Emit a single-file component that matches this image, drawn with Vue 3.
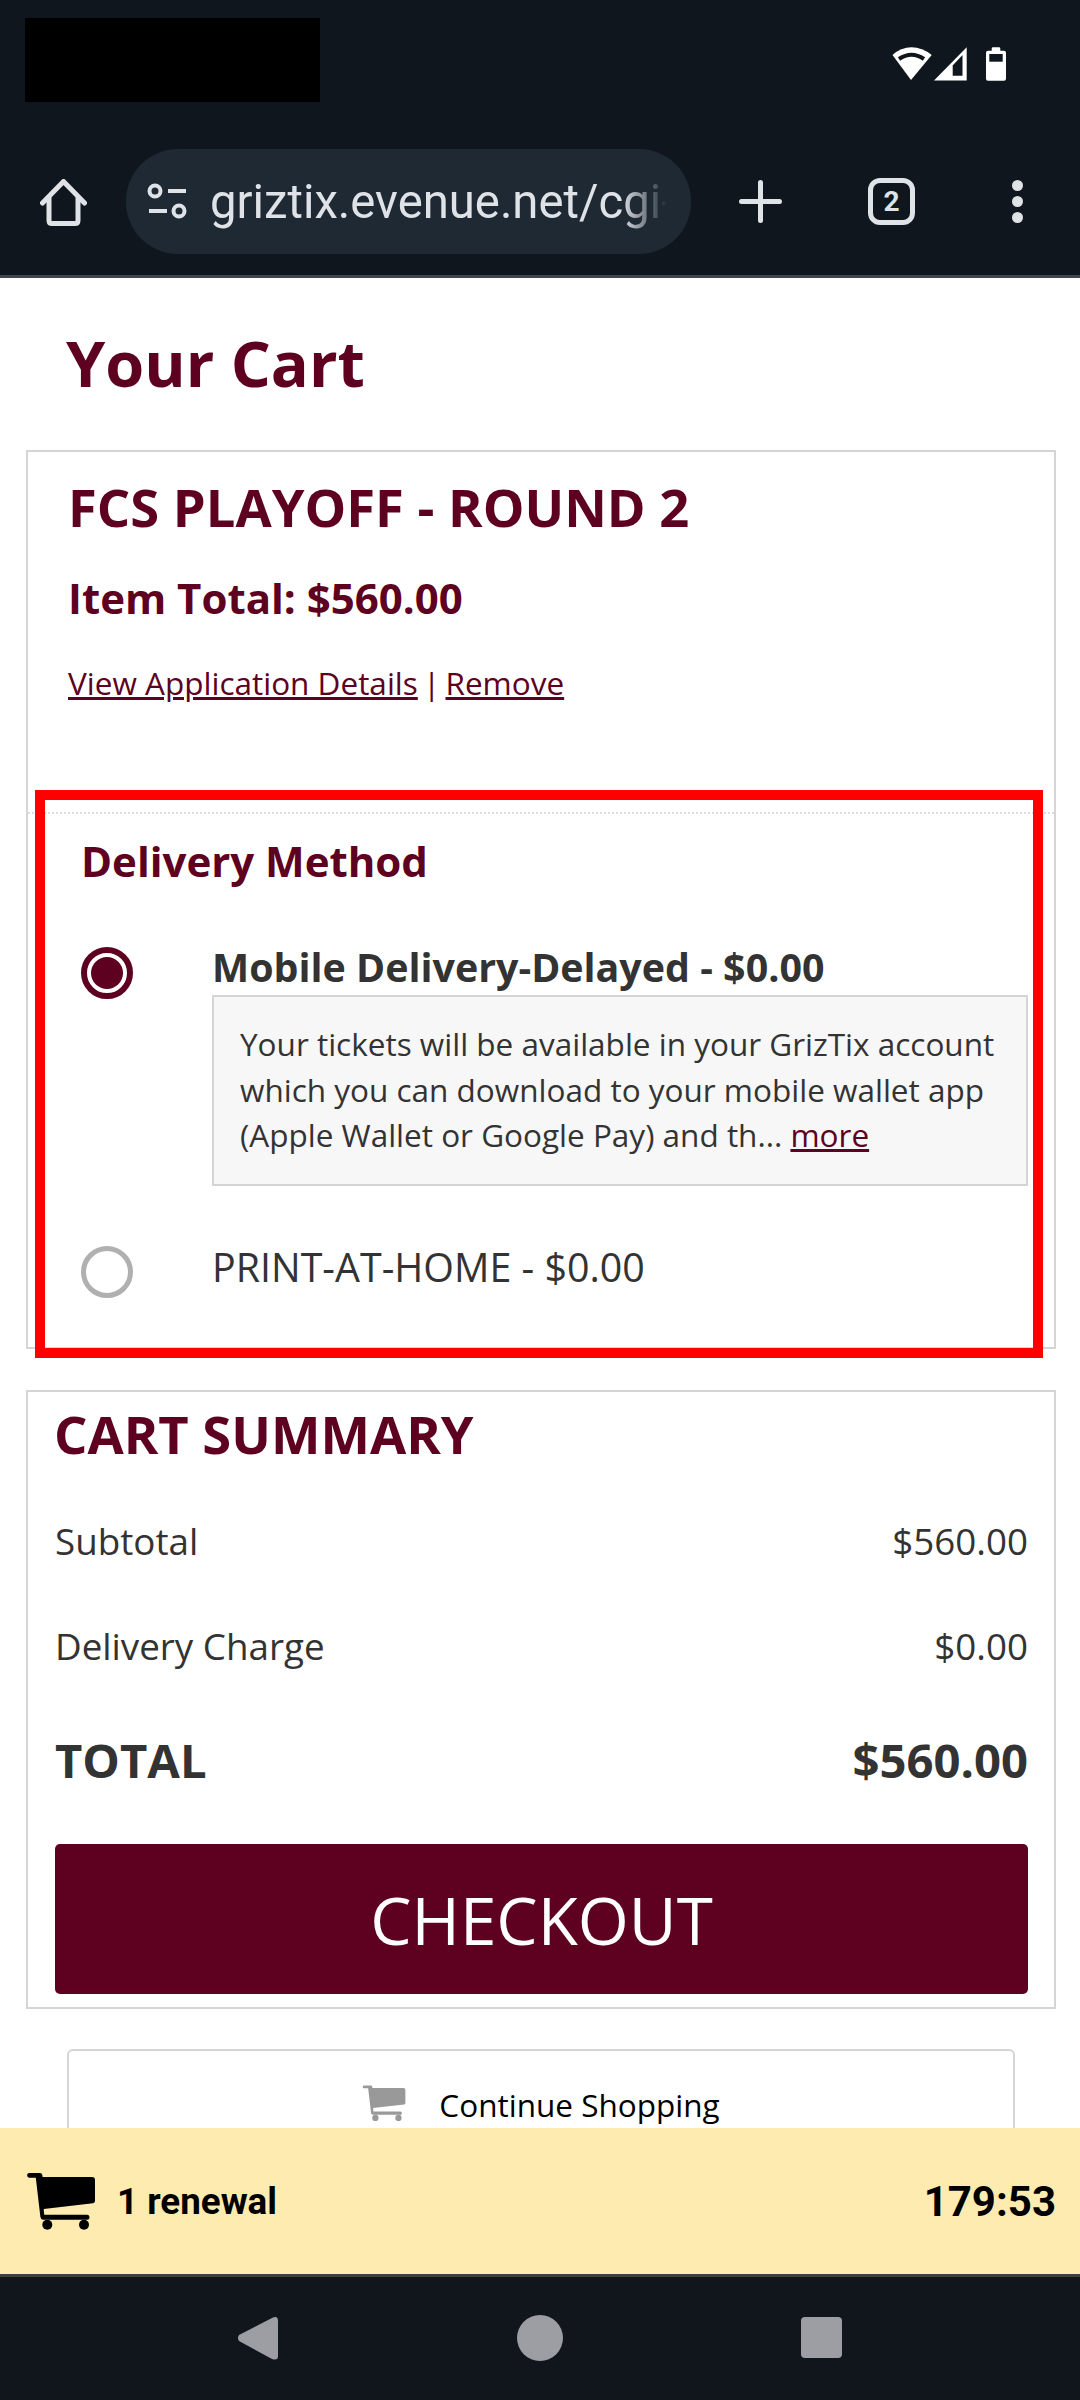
<template>
  <div class="phone">
    <header class="browser">
      <div class="status-row">
        <div class="status-blackout"></div>
        <svg class="status-icons" width="140" height="70" viewBox="0 0 140 70">
          <path d="M12.5 25Q21 17.3 31.5 17.3T51.7 25L31 50Z" fill="#fff" />
          <path d="M19 29Q31.5 20.5 44 29" fill="none" stroke="#10161d" stroke-width="4" />
          <path d="M54 50.5L86.7 17.3V50.5Z" fill="#fff" />
          <path d="M72.7 45.7V35.5L82.5 25V45.7Z" fill="#10161d" />
          <path d="M111.7 20.7V18.5Q111.7 17.3 113 17.3H119Q120.3 17.3 120.3 18.5V20.7H124Q126 20.7 126 22.7V48.7Q126 50.7 124 50.7H108Q106 50.7 106 48.7V22.7Q106 20.7 108 20.7Z" fill="#fff" />
          <rect x="109.3" y="24" width="13.4" height="7.7" fill="#10161d" />
        </svg>
      </div>
      <div class="toolbar">
        <svg class="home" width="47" height="47" viewBox="0 0 47 47" fill="none" stroke="#dfe2e7" stroke-width="5" stroke-linejoin="round" stroke-linecap="round">
          <path d="M2.5 24L23.5 2.5L44.5 24" />
          <path d="M9 19V41.5Q9 44.5 12 44.5H35Q38 44.5 38 41.5V19" />
        </svg>
        <div class="url-pill">
          <svg class="tune" width="44" height="38" viewBox="0 0 44 38" fill="none" stroke="#dfe2e7" stroke-width="4">
            <circle cx="9" cy="8" r="5.5" />
            <path d="M22 8H40" />
            <path d="M3 28H21" />
            <circle cx="33" cy="28" r="5.5" />
          </svg>
          <span class="url-text">griztix.evenue.net/cgi-bin</span>
        </div>
        <svg class="plus" width="43" height="43" viewBox="0 0 43 43" stroke="#dfe2e7" stroke-width="5" stroke-linecap="round">
          <path d="M21.5 2.5V40.5M2.5 21.5H40.5" />
        </svg>
        <div class="tabs">2</div>
        <div class="dots"><i></i><i></i><i></i></div>
      </div>
    </header>

    <main class="page">
      <h1 class="page-title">Your Cart</h1>

      <section class="card item-card">
        <div class="item-head">
          <h2 class="item-name">FCS PLAYOFF - ROUND 2</h2>
          <div class="item-total">Item Total: $560.00</div>
          <div class="item-links"><a>View Application Details</a> <span class="sep">|</span> <a>Remove</a></div>
        </div>

        <div class="delivery">
          <h3 class="delivery-title">Delivery Method</h3>
          <div class="option">
            <span class="radio checked"></span>
            <div class="option-body">
              <div class="option-label strong">Mobile Delivery-Delayed - $0.00</div>
              <div class="option-note">
                Your tickets will be available in your GrizTix account which you can download to your mobile wallet app (Apple Wallet or Google Pay) and th... <a>more</a>
              </div>
            </div>
          </div>
          <div class="option second">
            <span class="radio"></span>
            <div class="option-body">
              <div class="option-label">PRINT-AT-HOME - $0.00</div>
            </div>
          </div>
          <!-- red annotation drawn over the screenshot -->
          <div class="annotation"></div>
        </div>
      </section>

      <section class="card summary">
        <h2 class="summary-title">CART SUMMARY</h2>
        <div v-for="row in summaryRows" :key="row.label" class="summary-row">
          <span>{{ row.label }}</span><span>{{ row.value }}</span>
        </div>
        <div class="summary-row total"><span>TOTAL</span><span>$560.00</span></div>
        <button class="checkout">CHECKOUT</button>
      </section>

      <div class="continue">
        <svg class="continue-cart" width="44" height="38" viewBox="0 0 70 60">
          <path :d="cartPath" fill="#999" />
          <circle cx="21.3" cy="53.7" r="5" fill="#999" />
          <circle cx="58" cy="53.7" r="5" fill="#999" />
        </svg>
        <span>Continue Shopping</span>
      </div>
    </main>

    <div class="cart-bar">
      <div class="cart-count">
        <svg width="70" height="60" viewBox="0 0 70 60">
          <path :d="cartPath" fill="#000" />
          <circle cx="21.3" cy="53.7" r="5" fill="#000" />
          <circle cx="58" cy="53.7" r="5" fill="#000" />
        </svg>
        <span>1 renewal</span>
      </div>
      <div class="cart-timer">179:53</div>
    </div>

    <nav class="android-nav">
      <svg class="nav-back" width="41" height="46" viewBox="0 0 41 46">
        <path d="M35 3L2 20Q0 23 2 26L35 44Q41 46 41 41V6Q41 0 35 3Z" fill="#9d9ea3" />
      </svg>
      <span class="nav-home"></span>
      <span class="nav-recent"></span>
    </nav>
  </div>
</template>

<script setup>
const summaryRows = [
  { label: 'Subtotal', value: '$560.00' },
  { label: 'Delivery Charge', value: '$0.00' }
]

// same cart shape for the grey and the black icon
const cartPath = 'M3 2H14Q16 2 16.3 4L16.6 6H66Q69 6 69 9V30Q69 32 67 32.3L17.7 38L18.2 43.7H61A2.5 2.5 0 0 1 61 48.7H17Q14.7 48.7 14.4 46L9.8 6.7H3A2.4 2.4 0 0 1 3 2Z'
</script>

<style>
html,
body {
  margin: 0;
  background: #fff;
}
</style>

<style scoped>
.phone {
  width: 1080px;
  height: 2400px;
  display: flex;
  flex-direction: column;
  overflow: hidden;
  font-family: "Open Sans", "Liberation Sans", sans-serif;
  color: #333;
  background: #fff;
}

/* browser chrome */
.browser {
  height: 278px;
  flex: none;
  box-sizing: border-box;
  background: #10161d;
  border-bottom: 3px solid #40464b;
}
.status-row {
  height: 149px;
  box-sizing: border-box;
  display: flex;
  justify-content: space-between;
  align-items: flex-start;
  padding: 18px 60px 0 25px;
}
.status-blackout {
  width: 295px;
  height: 84px;
  background: #000;
}
.status-icons {
  margin-top: 12px;
}
.toolbar {
  display: flex;
  align-items: center;
  height: 105px;
  padding-left: 40px;
}
.home {
  flex: none;
  margin-top: 2px;
}
.url-pill {
  flex: none;
  width: 565px;
  height: 105px;
  margin-left: 39px;
  box-sizing: border-box;
  padding: 0 24px 0 20px;
  display: flex;
  align-items: center;
  border-radius: 52px;
  background: #1f2933;
}
.tune {
  flex: none;
}
.url-text {
  flex: 1;
  min-width: 0;
  margin-left: 20px;
  overflow: hidden;
  white-space: nowrap;
  font-family: Roboto, "Liberation Sans", sans-serif;
  font-size: 47.25px;
  color: #dfe2e7;
  -webkit-mask-image: linear-gradient(to right, #000 90%, transparent);
  mask-image: linear-gradient(to right, #000 90%, transparent);
}
.plus {
  flex: none;
  margin-left: 48px;
}
.tabs {
  flex: none;
  width: 47px;
  height: 47px;
  margin-left: 86px;
  box-sizing: border-box;
  border: 5px solid #dfe2e7;
  border-radius: 12px;
  display: flex;
  align-items: center;
  justify-content: center;
  font-family: Roboto, "Liberation Sans", sans-serif;
  font-size: 28px;
  font-weight: 700;
  color: #dfe2e7;
}
.dots {
  flex: none;
  margin-left: 97px;
  display: flex;
  flex-direction: column;
  gap: 5px;
}
.dots i {
  display: block;
  width: 11px;
  height: 11px;
  border-radius: 50%;
  background: #dfe2e7;
}

/* page */
.page {
  flex: 1;
  min-height: 0;
  overflow: hidden;
}
.page-title {
  margin: 45px 0 47px 66px;
  font-size: 63px;
  line-height: 80px;
  font-weight: 700;
  color: #5e0020;
}
.card {
  width: 1030px;
  margin-left: 26px;
  box-sizing: border-box;
  border: 2px solid #d5d5d5;
}
.item-head {
  padding: 23px 0 0 40px;
}
.item-name {
  margin: 0;
  font-size: 52.5px;
  line-height: 64px;
  font-weight: 700;
  color: #5e0020;
}
.item-total {
  margin-top: 32px;
  font-size: 42px;
  line-height: 54px;
  font-weight: 700;
  color: #5e0020;
}
.item-links {
  margin-top: 36px;
  font-size: 31.5px;
  line-height: 44px;
  color: #5e0020;
}
.sep {
  margin: 0 -3px;
}
.item-links a,
.option-note a {
  color: #5e0020;
  text-decoration: underline;
}

.delivery {
  position: relative;
  margin-top: 107px;
  padding: 20px 26px 49px 53px;
  border-top: 2px dotted #ddd;
}
.delivery-title {
  margin: 0;
  font-size: 42px;
  line-height: 54px;
  font-weight: 700;
  color: #5e0020;
}
.option {
  display: flex;
  margin-top: 54px;
}
.option.second {
  margin-top: 56px;
}
.radio {
  flex: none;
  width: 52px;
  height: 52px;
  margin: 5px 79px 0 0;
  box-sizing: border-box;
  border: 5px solid #b0b0b0;
  border-radius: 50%;
}
.second .radio {
  margin-top: 4px;
}
.radio.checked {
  border: 6px solid #5e0020;
  padding: 4px;
  background: #5e0020 content-box;
}
.option-body {
  flex: 1;
  min-width: 0;
}
.option-label {
  font-size: 39.4px;
  line-height: 50px;
}
.option-label.strong {
  font-weight: 700;
}
.option-note {
  margin-top: 3px;
  padding: 24px 20px 26px 26px;
  border: 2px solid #d5d5d5;
  background: #f7f7f7;
  font-size: 31.5px;
  line-height: 45.7px;
}
.annotation {
  position: absolute;
  top: -24px;
  left: 7px;
  width: 1008px;
  height: 568px;
  box-sizing: border-box;
  border: 10px solid #f00;
  pointer-events: none;
}

/* summary */
.summary {
  margin-top: 41px;
  padding: 10px 26px 13px 27px;
}
.summary-title {
  margin: 0 0 0 -1px;
  font-size: 52.5px;
  line-height: 64px;
  font-weight: 700;
  color: #5e0020;
}
.summary-row {
  display: flex;
  justify-content: space-between;
  margin-top: 50px;
  font-size: 36.75px;
  line-height: 50px;
}
.summary-row + .summary-row {
  margin-top: 55px;
}
.summary-row.total {
  margin-top: 59px;
  font-size: 47.25px;
  line-height: 60px;
  font-weight: 700;
}
.checkout {
  display: block;
  width: 100%;
  height: 150px;
  margin-top: 54px;
  border: 0;
  border-radius: 5px;
  background: #5e001f;
  color: #fff;
  font-family: inherit;
  font-size: 65.6px;
}
.continue {
  width: 948px;
  height: 130px;
  margin: 40px 0 0 67px;
  box-sizing: border-box;
  padding-top: 32px;
  display: flex;
  justify-content: center;
  align-items: flex-start;
  gap: 33px;
  border: 2px solid #d5d5d5;
  border-radius: 6px;
  color: #000;
  font-size: 31.5px;
  line-height: 44px;
}
.continue-cart {
  flex: none;
  margin-top: 1px;
}

/* sticky cart bar */
.cart-bar {
  flex: none;
  height: 146px;
  box-sizing: border-box;
  padding: 0 24px 0 26px;
  display: flex;
  align-items: center;
  justify-content: space-between;
  background: #fdebb0;
  color: #000;
  font-family: Roboto, "Liberation Sans", sans-serif;
  font-weight: 700;
}
.cart-count {
  display: flex;
  align-items: center;
  gap: 21px;
  font-size: 36.75px;
}
.cart-timer {
  font-size: 42px;
}

.android-nav {
  flex: none;
  height: 126px;
  box-sizing: border-box;
  padding: 0 0 2px 237px;
  display: flex;
  align-items: center;
  background: #11161c;
  border-top: 3px solid #3a4046;
}
.nav-home {
  width: 46px;
  height: 46px;
  margin-left: 239px;
  border-radius: 50%;
  background: #9d9ea3;
}
.nav-recent {
  width: 41px;
  height: 41px;
  margin-left: 238px;
  border-radius: 4px;
  background: #9d9ea3;
}
</style>
